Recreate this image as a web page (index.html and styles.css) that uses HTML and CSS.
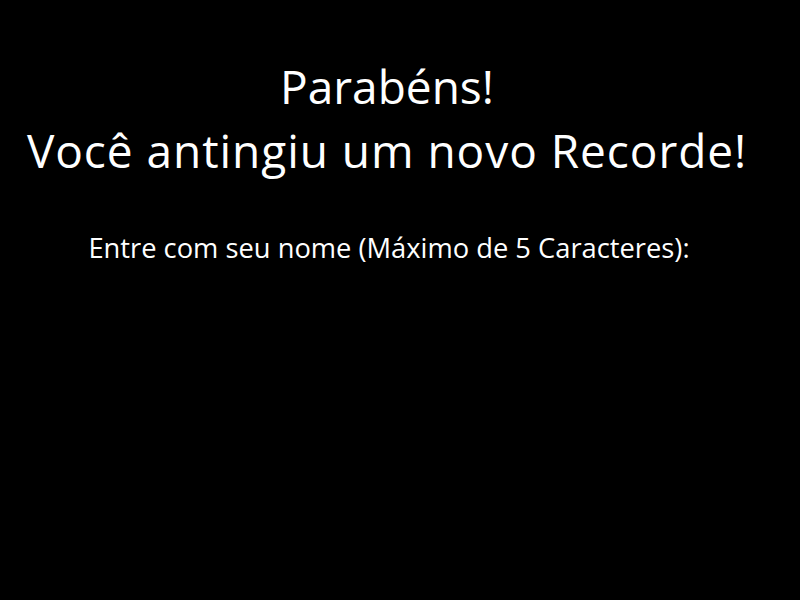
FILE: index.html
```html
<!DOCTYPE html>
<html lang="pt">
<head>
<meta charset="utf-8">
<title>Recorde</title>
<link rel="stylesheet" href="styles.css">
</head>
<body>
<main class="screen">
  <h1 class="title">
    <span class="line">Parabéns!</span>
    <span class="line line-wide">Você antingiu um novo Recorde!</span>
  </h1>
  <p class="prompt">Entre com seu nome (Máximo de 5 Caracteres):</p>
</main>
</body>
</html>
```
FILE: styles.css
```css
html, body {
  margin: 0;
  padding: 0;
  background: #000;
}
.screen {
  width: 800px;
  height: 600px;
  box-sizing: border-box;
  padding: 54px 26px 0 0;
  color: #fff;
  font-family: "Open Sans", "Noto Sans", sans-serif;
  display: flex;
  flex-direction: column;
  align-items: center;
}
.title {
  margin: 0;
  font-weight: 400;
  font-size: 46px;
  line-height: 64px;
  display: flex;
  flex-direction: column;
  align-items: center;
}
.line-wide {
  letter-spacing: 0.95px;
}
.prompt {
  margin: 48px 0 0;
  padding-left: 4px;
  font-size: 27.3px;
  line-height: 36px;
}
```
